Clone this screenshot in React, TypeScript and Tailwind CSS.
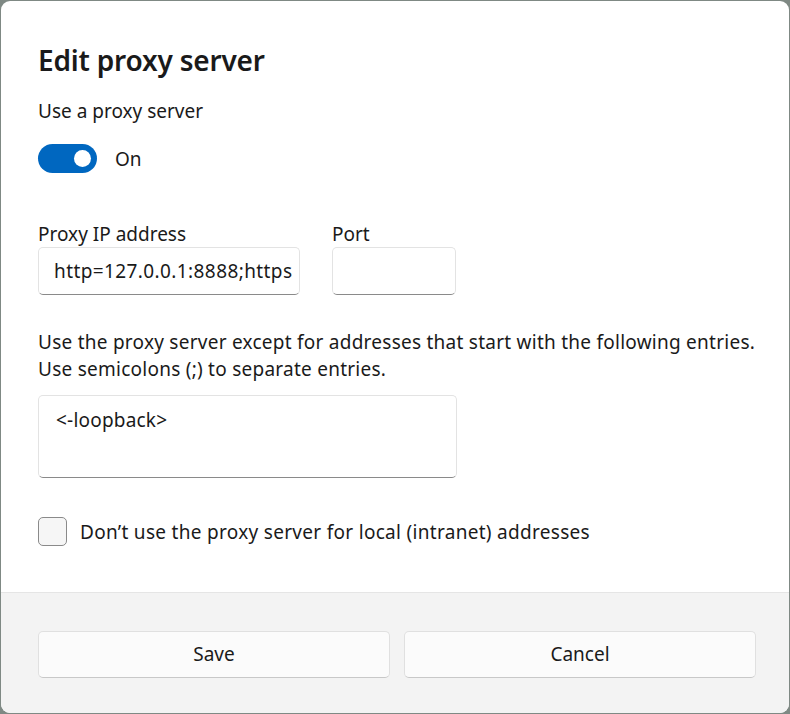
import React from "react";

export default function App() {
  const font = { fontFamily: '"Noto Sans", "Open Sans", sans-serif' };
  return (
    <div className="w-[790px] h-[714px] bg-[#7f8984] pt-[1px] px-[1px] overflow-hidden" style={font}>
      <div className="h-[712px] bg-white rounded-[9px] flex flex-col overflow-hidden text-[#1a1a1a]">
        <div className="flex-1 px-[37px] pt-[40px]">
          <h1 className="text-[28px] leading-[38px] font-semibold tracking-[-0.2px]">Edit proxy server</h1>
          <div className="mt-[19px] text-[19px] leading-[26px]">Use a proxy server</div>
          <div className="mt-[20px] flex items-center gap-[18px]">
            <div className="w-[59px] h-[29px] rounded-full bg-[#0067c0] flex items-center justify-end pr-[6px]">
              <div className="w-[17px] h-[17px] rounded-full bg-white" />
            </div>
            <span className="text-[19px] leading-[26px]">On</span>
          </div>
          <div className="mt-[48px] flex gap-[32px]">
            <div className="flex flex-col">
              <label className="text-[19px] leading-[26px]">Proxy IP address</label>
              <div className="w-[262px] h-[48px] rounded-[5px] border border-[#e3e3e3] border-b-[#8a8a8a] bg-white flex items-center pl-[15px] overflow-hidden whitespace-nowrap text-[19px] tracking-[0.4px]">
                http=127.0.0.1:8888;https
              </div>
            </div>
            <div className="flex flex-col">
              <label className="text-[19px] leading-[26px]">Port</label>
              <div className="w-[124px] h-[48px] rounded-[5px] border border-[#e3e3e3] border-b-[#8a8a8a] bg-white" />
            </div>
          </div>
          <p className="mt-[34px] text-[19px] leading-[27px] whitespace-nowrap tracking-[0.25px]">
            Use the proxy server except for addresses that start with the following entries.
            <br />
            Use semicolons (;) to separate entries.
          </p>
          <div className="mt-[12px] w-[419px] h-[83px] rounded-[5px] border border-[#e3e3e3] border-b-[#8a8a8a] bg-white pl-[17px] pt-[11px] text-[19px] leading-[26px] tracking-[0.2px]">
            &lt;-loopback&gt;
          </div>
          <div className="mt-[39px] flex items-center gap-[13px]">
            <div className="w-[29px] h-[29px] rounded-[5px] border border-[#8a8a8a] bg-[#f6f6f6]" />
            <span className="text-[19px] leading-[26px] tracking-[0.3px]">Don’t use the proxy server for local (intranet) addresses</span>
          </div>
        </div>
        <div className="h-[121px] bg-[#f3f3f3] border-t border-[#e5e5e5] pl-[37px] pr-[33px] pt-[2px] flex items-center gap-[14px]">
          <button className="flex-1 h-[47px] rounded-[5px] bg-[#fbfbfb] border border-[#e0e0e0] border-b-[#c8c8c8] text-[19px]">Save</button>
          <button className="flex-1 h-[47px] rounded-[5px] bg-[#fbfbfb] border border-[#e0e0e0] border-b-[#c8c8c8] text-[19px]">Cancel</button>
        </div>
      </div>
    </div>
  );
}
